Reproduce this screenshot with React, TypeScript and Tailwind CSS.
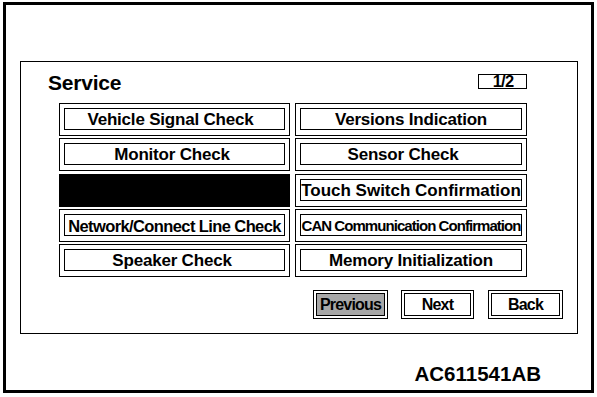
import React from "react";

type CellProps = {
  label?: string;
  black?: boolean;
  textClass?: string;
};

function Cell({ label, black, textClass }: CellProps) {
  if (black) {
    return <div className="h-[33px] border border-black bg-black" />;
  }
  return (
    <div className="h-[33px] border border-black pl-[4px] pr-[4px] pt-[4px] pb-[5px] flex">
      <div className="flex-1 border border-black flex items-center justify-center pt-[2px] overflow-visible">
        <span
          className={
            "whitespace-nowrap font-bold leading-[20px] text-black " +
            (textClass ?? "text-[17px] tracking-[-0.2px]")
          }
        >
          {label}
        </span>
      </div>
    </div>
  );
}

function NavButton({ label, gray, w }: { label: string; gray?: boolean; w: string }) {
  return (
    <div className={"h-[29px] border border-black p-[2px] flex " + w}>
      <div
        className={
          "flex-1 border border-black flex items-center justify-center pt-[1px] " +
          (gray ? "bg-[#a8a8a8]" : "bg-white")
        }
      >
        <span className="text-[16px] font-bold tracking-[-0.8px] leading-[18px] text-black">
          {label}
        </span>
      </div>
    </div>
  );
}

export default function App() {
  return (
    <div className="w-[597px] h-[397px] bg-white overflow-hidden font-['Liberation_Sans',Arial,sans-serif] text-black">
      <div className="ml-[3px] mt-[2px] w-[591px] h-[391px] border-[3px] border-black flex flex-col">
        {/* panel */}
        <div className="ml-[14px] mt-[56px] w-[558px] h-[273px] border border-black flex flex-col">
          <div className="ml-[27px] w-[479px] flex flex-col">
            {/* header */}
            <div className="pt-[11px] flex justify-between items-start">
              <span className="text-[21px] font-bold leading-[20px] tracking-[-0.2px]">Service</span>
              <div className="mt-[1px] w-[49px] h-[15px] border border-black overflow-visible">
                <span className="block text-center text-[16.5px] font-bold leading-[13px] tracking-[-0.8px] pl-[1px]">1/2</span>
              </div>
            </div>
            {/* grid */}
            <div className="ml-[11px] mt-[10px] w-[468px] grid grid-cols-[231px_232px] gap-x-[5px] gap-y-[2.25px]">
              <Cell label="Vehicle Signal Check" textClass="text-[17px] tracking-[-0.2px] pr-[8px]" />
              <Cell label="Versions Indication" />
              <Cell label="Monitor Check" textClass="text-[17px] tracking-[-0.2px] pr-[5px]" />
              <Cell label="Sensor Check" textClass="text-[17px] tracking-[-0.2px] pr-[16px]" />
              <Cell black />
              <Cell label="Touch Switch Confirmation" textClass="text-[17px] tracking-[0px]" />
              <Cell label="Network/Connect Line Check" textClass="text-[16.5px] tracking-[-0.6px]" />
              <Cell label="CAN Communication Confirmation" textClass="text-[15px] tracking-[-0.95px]" />
              <Cell label="Speaker Check" textClass="text-[17px] tracking-[-0.2px] pr-[5px]" />
              <Cell label="Memory Initialization" />
            </div>
          </div>
          {/* nav buttons */}
          <div className="mt-[13px] pr-[14px] flex justify-end gap-[13px]">
            <NavButton label="Previous" gray w="w-[75px]" />
            <NavButton label="Next" w="w-[73px]" />
            <div className="ml-[1px] flex">
              <NavButton label="Back" w="w-[75px]" />
            </div>
          </div>
        </div>
        {/* figure id */}
        <div className="mt-[30px] pr-[50px] flex justify-end">
          <span className="text-[20.5px] font-bold leading-[20px]">AC611541AB</span>
        </div>
      </div>
    </div>
  );
}
